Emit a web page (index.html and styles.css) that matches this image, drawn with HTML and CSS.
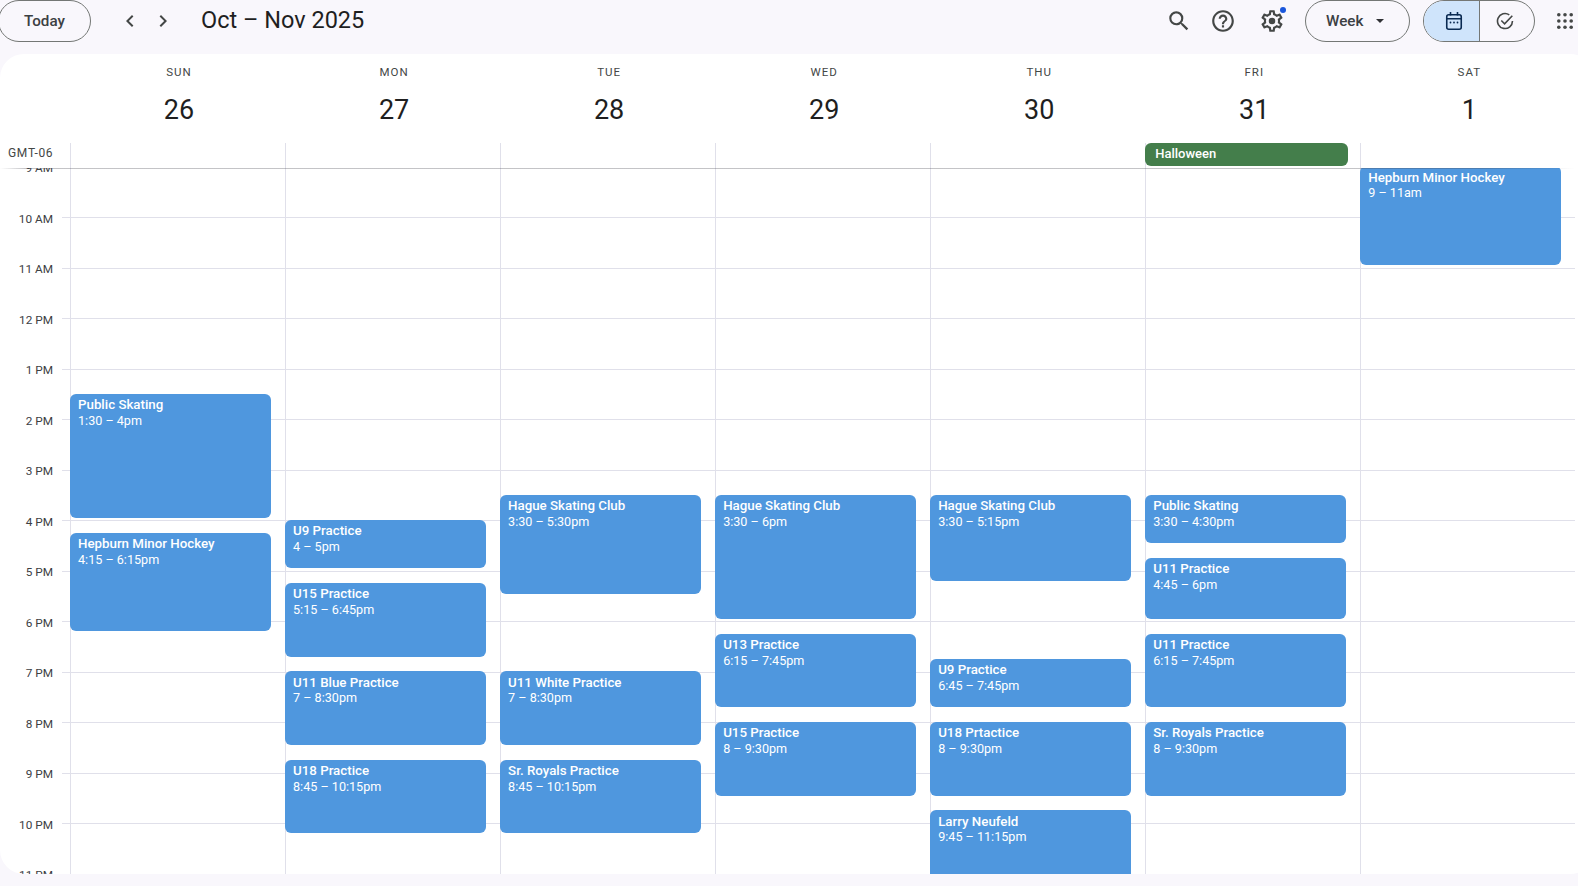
FILE: index.html
```html
<!DOCTYPE html>
<html lang="en">
<head>
<meta charset="utf-8">
<title>Calendar - Oct – Nov 2025</title>
<link rel="stylesheet" href="styles.css">
</head>
<body>
<div class="app">
  <header class="toolbar">
    <button class="pill today">Today</button>
    <div class="nav">
      <button class="icon-btn"><svg class="ico-nav" viewBox="0 0 24 24"><path d="M15.41 7.41 14 6l-6 6 6 6 1.41-1.41L10.83 12z"/></svg></button>
      <button class="icon-btn"><svg class="ico-nav" viewBox="0 0 24 24"><path d="M10 6 8.59 7.41 13.17 12l-4.58 4.59L10 18l6-6z"/></svg></button>
    </div>
    <h1 class="range">Oct – Nov 2025</h1>
    <div class="spacer"></div>
    <button class="icon-btn wide"><svg class="ico" viewBox="0 0 24 24"><path d="M15.5 14h-.79l-.28-.27A6.471 6.471 0 0 0 16 9.5 6.5 6.5 0 1 0 9.5 16c1.61 0 3.09-.59 4.23-1.57l.27.28v.79l5 4.99L20.49 19l-4.99-5zm-6 0C7.01 14 5 11.99 5 9.5S7.01 5 9.5 5 14 7.01 14 9.5 11.99 14 9.5 14z"/></svg></button>
    <button class="icon-btn wide"><svg class="ico" viewBox="0 0 24 24"><path d="M11 18h2v-2h-2v2zm1-16C6.48 2 2 6.48 2 12s4.48 10 10 10 10-4.48 10-10S17.52 2 12 2zm0 18c-4.41 0-8-3.59-8-8s3.59-8 8-8 8 3.59 8 8-3.59 8-8 8zm0-14c-2.21 0-4 1.79-4 4h2c0-1.1.9-2 2-2s2 .9 2 2c0 2-3 1.75-3 5h2c0-2.25 3-2.5 3-5 0-2.21-1.79-4-4-4z"/></svg></button>
    <button class="icon-btn wide gear"><svg class="ico" viewBox="0 0 24 24"><path d="M19.43 12.98c.04-.32.07-.64.07-.98 0-.34-.03-.66-.07-.98l2.11-1.65c.19-.15.24-.42.12-.64l-2-3.46c-.09-.16-.26-.25-.44-.25-.06 0-.12.01-.17.03l-2.49 1c-.52-.4-1.08-.73-1.69-.98l-.38-2.65C14.46 2.18 14.25 2 14 2h-4c-.25 0-.46.18-.49.42l-.38 2.65c-.61.25-1.17.59-1.69.98l-2.49-1c-.06-.02-.12-.03-.18-.03-.17 0-.34.09-.43.25l-2 3.46c-.13.22-.07.49.12.64l2.11 1.65c-.04.32-.07.65-.07.98 0 .33.03.66.07.98l-2.11 1.65c-.19.15-.24.42-.12.64l2 3.46c.09.16.26.25.44.25.06 0 .12-.01.17-.03l2.49-1c.52.4 1.08.73 1.69.98l.38 2.65c.03.24.24.42.49.42h4c.25 0 .46-.18.49-.42l.38-2.65c.61-.25 1.17-.59 1.69-.98l2.49 1c.06.02.12.03.18.03.17 0 .34-.09.43-.25l2-3.46c.12-.22.07-.49-.12-.64l-2.11-1.65zm-1.98-1.71c.04.31.05.52.05.73 0 .21-.02.43-.05.73l-.14 1.13.89.7 1.08.84-.7 1.21-1.27-.51-1.04-.42-.9.68c-.43.32-.84.56-1.25.73l-1.06.43-.16 1.13-.2 1.35h-1.4l-.19-1.35-.16-1.13-1.06-.43c-.43-.18-.83-.41-1.23-.71l-.91-.7-1.06.43-1.27.51-.7-1.21 1.08-.84.89-.7-.14-1.13c-.03-.31-.05-.54-.05-.74s.02-.43.05-.73l.14-1.13-.89-.7-1.08-.84.7-1.21 1.27.51 1.04.42.9-.68c.43-.32.84-.56 1.25-.73l1.06-.43.16-1.13.2-1.35h1.39l.19 1.35.16 1.13 1.06.43c.43.18.83.41 1.23.71l.91.7 1.06-.43 1.27-.51.7 1.21-1.07.85-.89.7.14 1.13zM12 9a3 3 0 1 0 0 6 3 3 0 0 0 0-6z"/></svg><span class="dot"></span></button>
    <button class="pill view">Week<span class="caret"></span></button>
    <div class="toggle">
      <button class="toggle-part on"><svg class="ico-cal" viewBox="0 0 18 20"><rect x="1.75" y="3.75" width="14.5" height="14.5" rx="2"/><path d="M1.75 7.75h14.5M5.5 1v3.5M12.5 1v3.5"/><circle class="cal-dot" cx="5.5" cy="11.5" r=".9"/><circle class="cal-dot" cx="9" cy="11.5" r=".9"/><circle class="cal-dot" cx="12.5" cy="11.5" r=".9"/></svg></button>
      <button class="toggle-part"><svg class="ico-task" viewBox="0 0 18 18"><path d="M13.3 2.9A7.5 7.5 0 1 0 16.5 9"/><path d="M5.3 8.5l3.3 3.3 7.7-8"/></svg></button>
    </div>
    <button class="icon-btn apps"><svg class="ico-apps" viewBox="0 0 18 18"><circle cx="2.8" cy="2.8" r="1.8"/><circle cx="9" cy="2.8" r="1.8"/><circle cx="15.2" cy="2.8" r="1.8"/><circle cx="2.8" cy="9" r="1.8"/><circle cx="9" cy="9" r="1.8"/><circle cx="15.2" cy="9" r="1.8"/><circle cx="2.8" cy="15.2" r="1.8"/><circle cx="9" cy="15.2" r="1.8"/><circle cx="15.2" cy="15.2" r="1.8"/></svg></button>
  </header>

  <main class="card">
    <div class="head">
      <div class="corner"></div>
      <div class="dayhead"><span class="dow">SUN</span><span class="num">26</span></div>
      <div class="dayhead"><span class="dow">MON</span><span class="num">27</span></div>
      <div class="dayhead"><span class="dow">TUE</span><span class="num">28</span></div>
      <div class="dayhead"><span class="dow">WED</span><span class="num">29</span></div>
      <div class="dayhead"><span class="dow">THU</span><span class="num">30</span></div>
      <div class="dayhead"><span class="dow">FRI</span><span class="num">31</span></div>
      <div class="dayhead"><span class="dow">SAT</span><span class="num">1</span></div>
      <div class="tz">GMT-06</div>
      <div class="allday"></div>
      <div class="allday"></div>
      <div class="allday"></div>
      <div class="allday"></div>
      <div class="allday"></div>
      <div class="allday"><div class="chip">Halloween</div></div>
      <div class="allday"></div>
    </div>
    <div class="viewport">
      <div class="week">
        <div class="times">
          <div class="hour">9 AM</div>
          <div class="hour">10 AM</div>
          <div class="hour">11 AM</div>
          <div class="hour">12 PM</div>
          <div class="hour">1 PM</div>
          <div class="hour">2 PM</div>
          <div class="hour">3 PM</div>
          <div class="hour">4 PM</div>
          <div class="hour">5 PM</div>
          <div class="hour">6 PM</div>
          <div class="hour">7 PM</div>
          <div class="hour">8 PM</div>
          <div class="hour">9 PM</div>
          <div class="hour">10 PM</div>
          <div class="hour">11 PM</div>
        </div>
        <div class="day">
          <div class="event" style="grid-row:19/span 10"><b>Public Skating</b><span>1:30 – 4pm</span></div>
          <div class="event" style="grid-row:30/span 8"><b>Hepburn Minor Hockey</b><span>4:15 – 6:15pm</span></div>
        </div>
        <div class="day">
          <div class="event" style="grid-row:29/span 4"><b>U9 Practice</b><span>4 – 5pm</span></div>
          <div class="event" style="grid-row:34/span 6"><b>U15 Practice</b><span>5:15 – 6:45pm</span></div>
          <div class="event" style="grid-row:41/span 6"><b>U11 Blue Practice</b><span>7 – 8:30pm</span></div>
          <div class="event" style="grid-row:48/span 6"><b>U18 Practice</b><span>8:45 – 10:15pm</span></div>
        </div>
        <div class="day">
          <div class="event" style="grid-row:27/span 8"><b>Hague Skating Club</b><span>3:30 – 5:30pm</span></div>
          <div class="event" style="grid-row:41/span 6"><b>U11 White Practice</b><span>7 – 8:30pm</span></div>
          <div class="event" style="grid-row:48/span 6"><b>Sr. Royals Practice</b><span>8:45 – 10:15pm</span></div>
        </div>
        <div class="day">
          <div class="event" style="grid-row:27/span 10"><b>Hague Skating Club</b><span>3:30 – 6pm</span></div>
          <div class="event" style="grid-row:38/span 6"><b>U13 Practice</b><span>6:15 – 7:45pm</span></div>
          <div class="event" style="grid-row:45/span 6"><b>U15 Practice</b><span>8 – 9:30pm</span></div>
        </div>
        <div class="day">
          <div class="event" style="grid-row:27/span 7"><b>Hague Skating Club</b><span>3:30 – 5:15pm</span></div>
          <div class="event" style="grid-row:40/span 4"><b>U9 Practice</b><span>6:45 – 7:45pm</span></div>
          <div class="event" style="grid-row:45/span 6"><b>U18 Prtactice</b><span>8 – 9:30pm</span></div>
          <div class="event" style="grid-row:52/span 6"><b>Larry Neufeld</b><span>9:45 – 11:15pm</span></div>
        </div>
        <div class="day">
          <div class="event" style="grid-row:27/span 4"><b>Public Skating</b><span>3:30 – 4:30pm</span></div>
          <div class="event" style="grid-row:32/span 5"><b>U11 Practice</b><span>4:45 – 6pm</span></div>
          <div class="event" style="grid-row:38/span 6"><b>U11 Practice</b><span>6:15 – 7:45pm</span></div>
          <div class="event" style="grid-row:45/span 6"><b>Sr. Royals Practice</b><span>8 – 9:30pm</span></div>
        </div>
        <div class="day">
          <div class="event" style="grid-row:1/span 8"><b>Hepburn Minor Hockey</b><span>9 – 11am</span></div>
        </div>
      </div>
      <div class="divider"></div>
    </div>
  </main>
</div>
</body>
</html>
```

FILE: styles.css
```css
* { box-sizing: border-box; }
html, body { margin: 0; height: 100%; }
body {
  overflow: hidden;
  background: #f9f7fc;
  font-family: Roboto, "Liberation Sans", sans-serif;
  color: #1f1f1f;
}
button {
  font: inherit;
  color: inherit;
  background: none;
  border: 0;
  padding: 0;
}
.app {
  display: flex;
  flex-direction: column;
  height: 886px;
  padding-bottom: 12px;
}

/* toolbar */
.toolbar {
  flex: none;
  height: 54px;
  padding-bottom: 12px;
  display: flex;
  align-items: center;
}
.pill {
  height: 42px;
  border: 1px solid #747775;
  border-radius: 21px;
  font-size: 15.2px;
  font-weight: 500;
  color: #3c4043;
}
.today { width: 93px; margin-left: -2px; }
.nav { display: flex; margin-left: 22px; }
.icon-btn {
  position: relative;
  width: 33px;
  height: 42px;
  display: flex;
  align-items: center;
  justify-content: center;
}
.ico-nav { width: 24px; height: 24px; fill: #444746; }
.range {
  margin: 0 0 2px 22px;
  font-size: 23.5px;
  font-weight: 400;
  color: #1f1f1f;
  white-space: nowrap;
}
.spacer { flex: 1; }
.wide { width: 44px; }
.ico { width: 26px; height: 26px; fill: #444746; }
.gear { margin-left: 5px; }
.dot {
  position: absolute;
  left: 30px;
  top: 7px;
  width: 6px;
  height: 6px;
  border-radius: 50%;
  background: #1a56db;
}
.view {
  width: 105px;
  margin-left: 11px;
  padding-left: 20px;
  display: flex;
  align-items: center;
}
.caret {
  margin-left: 13px;
  border-left: 4.5px solid transparent;
  border-right: 4.5px solid transparent;
  border-top: 4.5px solid #303134;
}
.toggle {
  width: 112px;
  height: 42px;
  margin-left: 13px;
  display: flex;
  border: 1px solid #747775;
  border-radius: 21px;
  overflow: hidden;
}
.toggle-part {
  flex: 1;
  display: flex;
  align-items: center;
  justify-content: center;
  padding-right: 4px;
}
.toggle-part.on {
  flex: none;
  width: 56px;
  padding: 0 0 0 4px;
  background: #cfe4fb;
  border-right: 1px solid #747775;
}
.ico-cal {
  width: 18px;
  height: 20px;
  fill: none;
  stroke: #0a2a52;
  stroke-width: 1.6;
}
.cal-dot { fill: #0a2a52; stroke: none; }
.ico-task {
  width: 18px;
  height: 18px;
  fill: none;
  stroke: #444746;
  stroke-width: 1.6;
}
.apps { width: 40px; margin-left: 10px; margin-right: -7px; }
.ico-apps { width: 18px; height: 18px; fill: #444746; }

/* calendar card */
.card {
  flex: 1;
  min-height: 0;
  margin-right: -16px;
  padding-right: 18.7px;
  display: flex;
  flex-direction: column;
  background: #fff;
  border-radius: 24px;
  overflow: hidden;
}
.head, .week {
  display: grid;
  grid-template-columns: 70px repeat(7, 1fr);
}
.head { flex: none; }
.dayhead {
  height: 89px;
  padding: 10px 0 0 3px;
  display: flex;
  flex-direction: column;
  align-items: center;
}
.dow {
  font-size: 11.5px;
  line-height: 16px;
  font-weight: 400;
  letter-spacing: 1px;
  color: #444746;
}
.num {
  margin-top: 10px;
  font-size: 27px;
  line-height: 40px;
  color: #1f1f1f;
}
.tz {
  height: 25px;
  padding: 3px 0 0 8px;
  font-size: 12px;
  line-height: 14px;
  letter-spacing: .7px;
  color: #444746;
}
.allday {
  height: 25px;
  border-left: 1px solid #e0e0ea;
}
.chip {
  height: 23px;
  margin: 0 12px 0 -1px;
  padding-left: 10px;
  border-radius: 6px;
  background: #447e4b;
  color: #fff;
  font-size: 13px;
  font-weight: 500;
  line-height: 22px;
}

/* time grid */
.viewport {
  flex: 1;
  min-height: 0;
  position: relative;
  overflow: hidden;
  background-image: repeating-linear-gradient(transparent 0 49px, #e0e0ea 49px 50px, transparent 50px 50.5px);
  background-size: 100% 100%;
  background-position: 62px 0;
  background-repeat: no-repeat;
}
.divider {
  position: absolute;
  left: 0;
  right: 0;
  top: 0;
  height: 1px;
  background: linear-gradient(to right, rgba(70, 70, 80, 0) 0, rgba(70, 70, 80, .32) 25px, rgba(70, 70, 80, .32) 94%, rgba(70, 70, 80, 0) 100%);
}
.week {
  margin-top: -1.6px;
}
.times { margin-top: -5px; }
.hour {
  height: 50.5px;
  padding-right: 17px;
  text-align: right;
  font-size: 11.8px;
  line-height: 14px;
  color: #3c4043;
}
.day {
  display: grid;
  grid-template-rows: repeat(58, 12.625px);
  border-left: 1px solid #e0e0ea;
}
.event {
  min-width: 0;
  margin: 0 14px 2.1px -1px;
  padding: 3.3px 8px 0;
  overflow: hidden;
  border-radius: 6px;
  background: #4f97de;
  color: #fff;
  font-size: 12.6px;
  line-height: 15.75px;
}
.event b, .event span { display: block; white-space: nowrap; }
.event b { font-size: 13.3px; font-weight: 500; }
```
